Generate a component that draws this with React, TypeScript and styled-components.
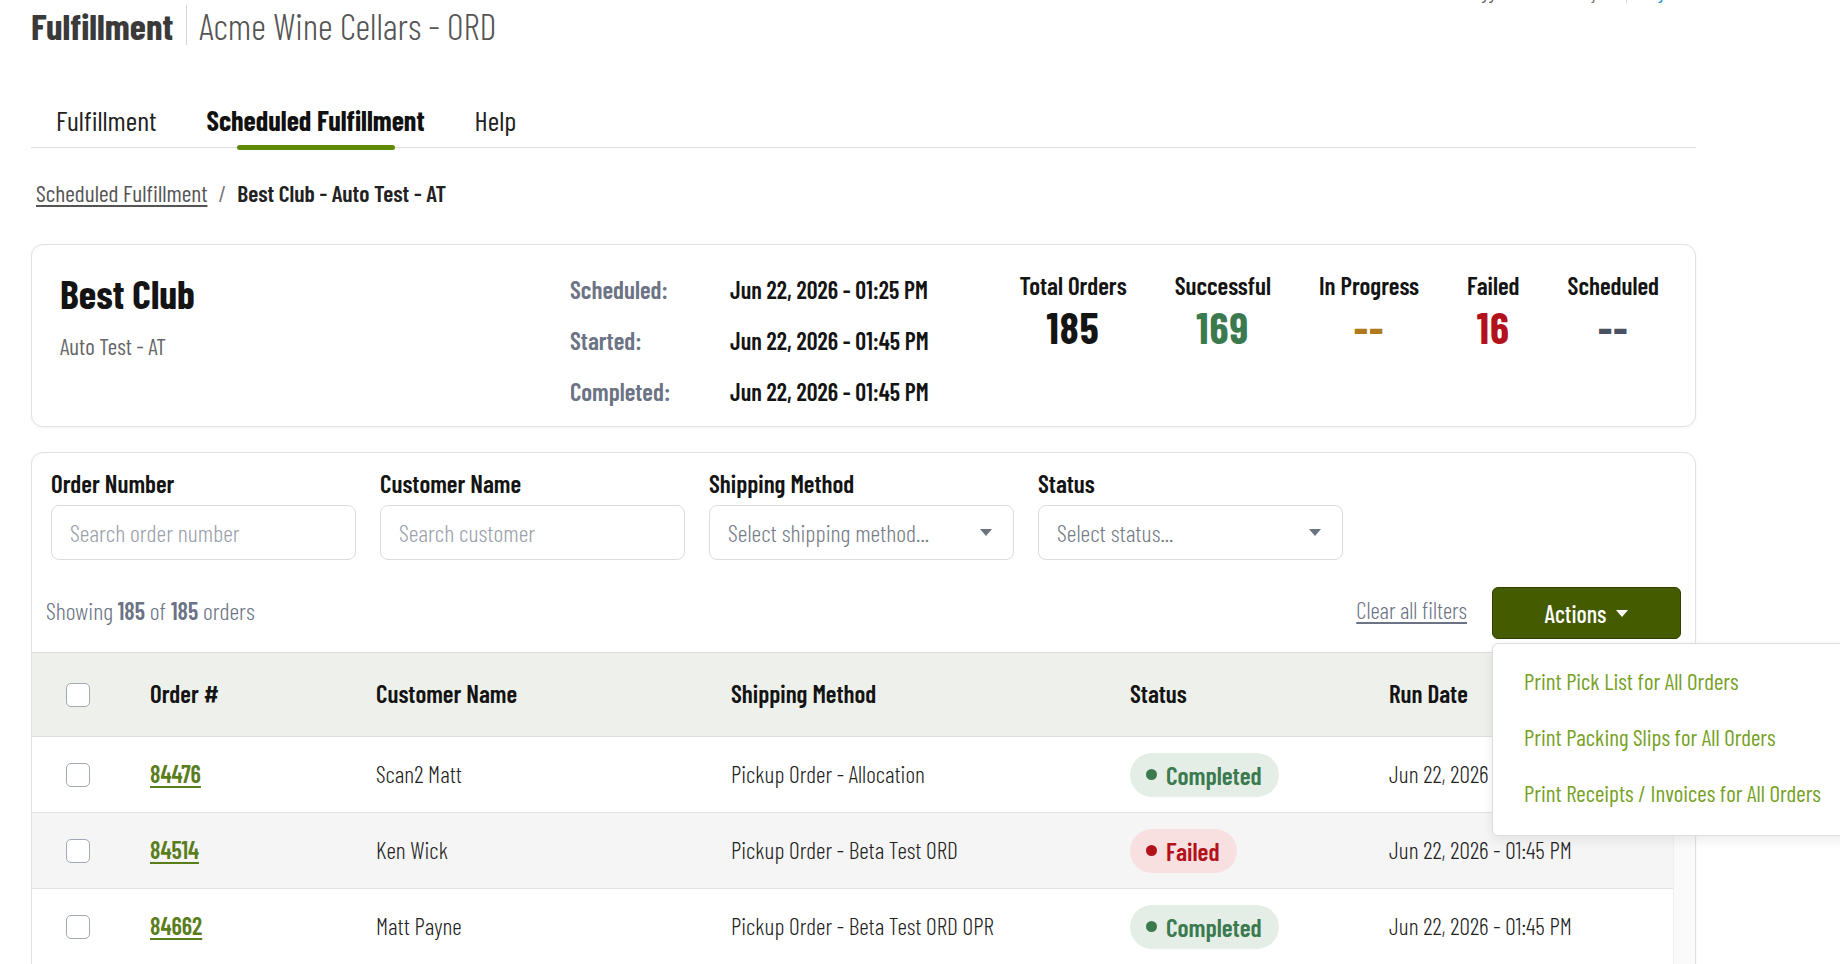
import React from "react";
import styled, { createGlobalStyle } from "styled-components";

const GlobalStyle = createGlobalStyle`
  html, body {
    margin: 0;
    padding: 0;
    background: #ffffff;
    overflow: hidden;
  }
  body {
    font-family: "Barlow Condensed", "Roboto Condensed", "Liberation Sans", sans-serif;
    font-variant-ligatures: none;
    color: #1c1c1c;
  }
  * { box-sizing: border-box; }
`;

const Page = styled.div`
  width: 1840px;
  height: 964px;
  padding: 0 144px 0 31px;
  overflow: hidden;
`;

// page is scrolled a little: only the bottom of the user bar shows
const UserBar = styled.div`
  display: flex;
  justify-content: flex-end;
  align-items: center;
  gap: 14px;
  height: 22px;
  margin-top: -19px;
  padding-right: 9px;
  font-size: 18px;
  line-height: 22px;
  color: #666;
`;

const UserLink = styled.span`
  color: #1a8fd0;
`;

const UserDivider = styled.span`
  width: 1px;
  height: 22px;
  background: #d6d6d6;
`;

const TitleRow = styled.div`
  display: flex;
  align-items: center;
  height: 44px;
`;

const AppTitle = styled.h1`
  margin: 0;
  font-size: 37px;
  line-height: 44px;
  font-weight: 700;
  color: #3a3a3a;
`;

const TitleDivider = styled.span`
  width: 1px;
  height: 40px;
  margin: 0 12px 0 13px;
  background: #d4d4d4;
`;

const StoreName = styled.span`
  font-size: 36.5px;
  line-height: 44px;
  font-weight: 300;
  color: #555;
`;

const TabBar = styled.nav`
  display: flex;
  margin-top: 55px;
  border-bottom: 1px solid #dedede;
`;

const Tab = styled.div<{ $active?: boolean }>`
  position: relative;
  padding: 0 25px 9px;
  font-size: 28px;
  line-height: 36px;
  font-weight: ${(p) => (p.$active ? 700 : 400)};
  color: ${(p) => (p.$active ? "#111" : "#222")};

  &::after {
    content: "";
    display: ${(p) => (p.$active ? "block" : "none")};
    position: absolute;
    left: 55px;
    right: 55px;
    bottom: -3px;
    height: 5px;
    border-radius: 3px;
    background: #5e8a06;
  }
`;

const Breadcrumb = styled.div`
  display: flex;
  align-items: center;
  gap: 11px;
  margin-top: 30px;
  padding-left: 5px;
  font-size: 23.5px;
  line-height: 30px;
`;

const CrumbLink = styled.a`
  color: #555;
  font-weight: 400;
  text-decoration: underline;
  text-underline-offset: 3px;
`;

const CrumbSep = styled.span`
  color: #777;
`;

const CrumbCurrent = styled.span`
  color: #222;
  font-weight: 600;
`;

const Card = styled.section`
  border: 1px solid #e1e1e1;
  border-radius: 12px;
  background: #fff;
  box-shadow: 0 1px 3px rgba(0, 0, 0, 0.05);
`;

const SummaryCard = styled(Card)`
  display: flex;
  align-items: flex-start;
  margin-top: 36px;
  padding: 23px 36px 14px 28px;
`;

const ClubBlock = styled.div`
  width: 510px;
`;

const ClubName = styled.div`
  font-size: 40px;
  line-height: 50px;
  font-weight: 700;
  color: #141414;
`;

const ClubSub = styled.div`
  margin-top: 13px;
  font-size: 23px;
  line-height: 30px;
  font-weight: 400;
  color: #666;
`;

const Details = styled.div`
  display: grid;
  grid-template-columns: 160px auto;
  grid-auto-rows: 42px;
  row-gap: 9px;
  align-items: center;
  font-weight: 600;
`;

const DetailLabel = styled.span`
  font-size: 25px;
  color: #6b7384;
`;

const DetailValue = styled.span`
  font-size: 24px;
  color: #141414;
`;

const Stats = styled.div`
  display: flex;
  gap: 48px;
  margin-left: auto;
`;

const Stat = styled.div`
  display: flex;
  flex-direction: column;
  align-items: center;
`;

const StatLabel = styled.div`
  font-size: 25px;
  line-height: 34px;
  font-weight: 600;
  color: #141414;
`;

const StatValue = styled.div<{ $color: string }>`
  font-size: 43px;
  line-height: 50px;
  font-weight: 700;
  letter-spacing: 1px;
  color: ${(p) => p.$color};
`;

const OrdersCard = styled(Card)`
  margin-top: 25px;
  height: 600px;
`;

const Filters = styled.div`
  display: flex;
  gap: 24px;
  padding: 15px 19px 0;
`;

const Field = styled.div`
  display: flex;
  flex-direction: column;
  gap: 7px;
  width: 305px;
`;

const FieldLabel = styled.label`
  font-size: 25px;
  line-height: 30px;
  font-weight: 600;
  color: #141414;
`;

const TextBox = styled.div`
  display: flex;
  align-items: center;
  justify-content: space-between;
  height: 55px;
  padding: 0 21px 0 18px;
  border: 1px solid #dcdcdc;
  border-radius: 8px;
  background: #fff;
  font-size: 24px;
  font-weight: 300;
  color: #9aa1ab;
`;

const SelectText = styled.span`
  color: #757c88;
`;

const Caret = styled.span<{ $color: string }>`
  width: 0;
  height: 0;
  border-left: 6px solid transparent;
  border-right: 6px solid transparent;
  border-top: 7px solid ${(p) => p.$color};
`;

const Toolbar = styled.div`
  display: flex;
  align-items: center;
  height: 52px;
  margin: 27px 0 13px;
  padding: 0 14px;
`;

const Showing = styled.div`
  margin-bottom: 6px;
  font-size: 24px;
  font-weight: 300;
  color: #6b7384;

  b {
    font-weight: 600;
  }
`;

const ToolbarRight = styled.div`
  display: flex;
  align-items: center;
  gap: 25px;
  margin-left: auto;
`;

const ClearLink = styled.a`
  margin-bottom: 6px;
  font-size: 23px;
  font-weight: 300;
  color: #6b7384;
  text-decoration: underline;
  text-underline-offset: 3px;
`;

const ActionsWrap = styled.div`
  position: relative;
`;

const ActionsButton = styled.button`
  display: flex;
  align-items: center;
  justify-content: center;
  gap: 10px;
  width: 189px;
  height: 52px;
  border: 1px solid #2f3f00;
  border-radius: 6px;
  background: #445b00;
  color: #fff;
  font-family: inherit;
  font-size: 24px;
  font-weight: 500;
`;

const Menu = styled.div`
  position: absolute;
  top: 56px;
  left: 0;
  z-index: 5;
  width: 372px;
  padding: 9px 0 14px;
  border: 1px solid #dcdcdc;
  border-radius: 6px;
  background: #fff;
  box-shadow: 0 4px 12px rgba(0, 0, 0, 0.08);
`;

const MenuItem = styled.div`
  padding: 0 31px;
  font-size: 23px;
  line-height: 56px;
  font-weight: 400;
  color: #76a11f;
  white-space: nowrap;
`;

const TableWrap = styled.div`
  display: flex;
  border-top: 1px solid #dedede;
`;

const Table = styled.div`
  flex: 1;
`;

const ScrollTrack = styled.div`
  width: 22px;
  background: #fafafa;
  border-left: 1px solid #f0f0f0;
`;

const cols = "118px 226px 355px 399px 259px 1fr";

const HeadRow = styled.div`
  display: grid;
  grid-template-columns: ${cols};
  align-items: center;
  height: 84px;
  padding-bottom: 3px;
  background: #eef1eb;
  border-bottom: 1px solid #dedede;
  font-size: 25px;
  font-weight: 600;
  color: #141414;
`;

const Row = styled.div<{ $striped?: boolean }>`
  display: grid;
  grid-template-columns: ${cols};
  align-items: center;
  height: 76px;
  padding-bottom: 3px;
  background: ${(p) => (p.$striped ? "#f5f5f5" : "#fff")};
  border-bottom: 1px solid #e2e2e2;
  font-size: 23.5px;
  font-weight: 300;
  color: #222;
`;

const CheckCell = styled.div`
  display: flex;
  padding: 3px 0 0 34px;
`;

const Checkbox = styled.span`
  width: 24px;
  height: 24px;
  border: 1.5px solid #a3a9b3;
  border-radius: 5px;
  background: #fff;
`;

const OrderLink = styled.a`
  justify-self: start;
  font-size: 24px;
  color: #5a7d1c;
  font-weight: 600;
  text-decoration: underline;
  text-decoration-thickness: 2px;
  text-underline-offset: 3px;
`;

const Pill = styled.span<{ $kind: "ok" | "fail" }>`
  justify-self: start;
  display: inline-flex;
  align-items: center;
  gap: 9px;
  height: 44px;
  margin-top: 3px;
  padding: 0 17px 0 16px;
  border-radius: 22px;
  background: ${(p) => (p.$kind === "ok" ? "#e5ede7" : "#f8e0e1")};
  color: ${(p) => (p.$kind === "ok" ? "#3b7a4f" : "#b3121c")};
  font-size: 25.5px;
  font-weight: 600;

  &::before {
    content: "";
    width: 11px;
    height: 11px;
    border-radius: 50%;
    background: currentColor;
  }
`;

const orders = [
  { id: "84476", name: "Scan2 Matt", method: "Pickup Order - Allocation", ok: true },
  { id: "84514", name: "Ken Wick", method: "Pickup Order - Beta Test ORD", ok: false },
  { id: "84662", name: "Matt Payne", method: "Pickup Order - Beta Test ORD OPR", ok: true },
];

const stats = [
  { label: "Total Orders", value: "185", color: "#141414" },
  { label: "Successful", value: "169", color: "#3b7a4f" },
  { label: "In Progress", value: "--", color: "#b07a1c" },
  { label: "Failed", value: "16", color: "#b3121c" },
  { label: "Scheduled", value: "--", color: "#4a5263" },
];

export default function App() {
  return (
    <Page>
      <GlobalStyle />
      <UserBar>
        <span>Logged in as Matt Payne</span>
        <UserDivider />
        <UserLink>Log out</UserLink>
      </UserBar>

      <TitleRow>
        <AppTitle>Fulfillment</AppTitle>
        <TitleDivider />
        <StoreName>Acme Wine Cellars - ORD</StoreName>
      </TitleRow>

      <TabBar>
        <Tab>Fulfillment</Tab>
        <Tab $active>Scheduled Fulfillment</Tab>
        <Tab>Help</Tab>
      </TabBar>

      <Breadcrumb>
        <CrumbLink>Scheduled Fulfillment</CrumbLink>
        <CrumbSep>/</CrumbSep>
        <CrumbCurrent>Best Club - Auto Test - AT</CrumbCurrent>
      </Breadcrumb>

      <SummaryCard>
        <ClubBlock>
          <ClubName>Best Club</ClubName>
          <ClubSub>Auto Test - AT</ClubSub>
        </ClubBlock>
        <Details>
          <DetailLabel>Scheduled:</DetailLabel>
          <DetailValue>Jun 22, 2026 - 01:25 PM</DetailValue>
          <DetailLabel>Started:</DetailLabel>
          <DetailValue>Jun 22, 2026 - 01:45 PM</DetailValue>
          <DetailLabel>Completed:</DetailLabel>
          <DetailValue>Jun 22, 2026 - 01:45 PM</DetailValue>
        </Details>
        <Stats>
          {stats.map((s) => (
            <Stat key={s.label}>
              <StatLabel>{s.label}</StatLabel>
              <StatValue $color={s.color}>{s.value}</StatValue>
            </Stat>
          ))}
        </Stats>
      </SummaryCard>

      <OrdersCard>
        <Filters>
          <Field>
            <FieldLabel>Order Number</FieldLabel>
            <TextBox>Search order number</TextBox>
          </Field>
          <Field>
            <FieldLabel>Customer Name</FieldLabel>
            <TextBox>Search customer</TextBox>
          </Field>
          <Field>
            <FieldLabel>Shipping Method</FieldLabel>
            <TextBox>
              <SelectText>Select shipping method...</SelectText>
              <Caret $color="#6b7280" />
            </TextBox>
          </Field>
          <Field>
            <FieldLabel>Status</FieldLabel>
            <TextBox>
              <SelectText>Select status...</SelectText>
              <Caret $color="#6b7280" />
            </TextBox>
          </Field>
        </Filters>

        <Toolbar>
          <Showing>
            Showing <b>185</b> of <b>185</b> orders
          </Showing>
          <ToolbarRight>
            <ClearLink>Clear all filters</ClearLink>
            <ActionsWrap>
              <ActionsButton>
                Actions <Caret $color="#fff" />
              </ActionsButton>
              <Menu>
                <MenuItem>Print Pick List for All Orders</MenuItem>
                <MenuItem>Print Packing Slips for All Orders</MenuItem>
                <MenuItem>Print Receipts / Invoices for All Orders</MenuItem>
              </Menu>
            </ActionsWrap>
          </ToolbarRight>
        </Toolbar>

        <TableWrap>
          <Table>
            <HeadRow>
              <CheckCell>
                <Checkbox />
              </CheckCell>
              <span>Order #</span>
              <span>Customer Name</span>
              <span>Shipping Method</span>
              <span>Status</span>
              <span>Run Date</span>
            </HeadRow>
            {orders.map((o, i) => (
              <Row key={o.id} $striped={i % 2 === 1}>
                <CheckCell>
                  <Checkbox />
                </CheckCell>
                <OrderLink>{o.id}</OrderLink>
                <span>{o.name}</span>
                <span>{o.method}</span>
                <Pill $kind={o.ok ? "ok" : "fail"}>{o.ok ? "Completed" : "Failed"}</Pill>
                <span>Jun 22, 2026 - 01:45 PM</span>
              </Row>
            ))}
          </Table>
          <ScrollTrack />
        </TableWrap>
      </OrdersCard>
    </Page>
  );
}
